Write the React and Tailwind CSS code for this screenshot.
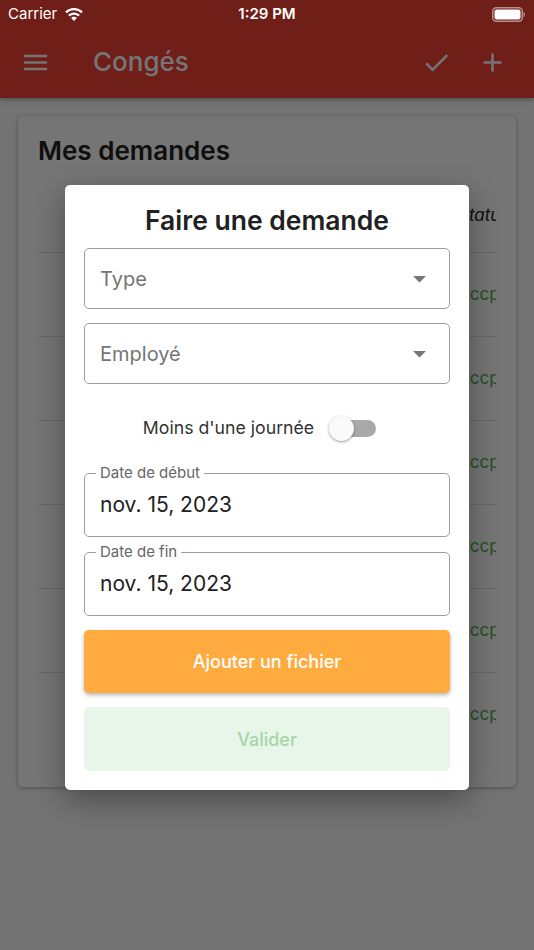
import React from "react";

function MenuIcon() {
  return (
    <svg width="31" height="31" viewBox="0 0 24 24" fill="#ffffff">
      <path d="M3 18h18v-2H3v2zm0-5h18v-2H3v2zm0-7v2h18V6H3z" />
    </svg>
  );
}
function CheckIcon() {
  return (
    <svg width="31" height="31" viewBox="0 0 24 24" fill="#ffffff">
      <path d="M9 16.2L4.8 12l-1.4 1.4L9 19 21 7l-1.4-1.4L9 16.2z" />
    </svg>
  );
}
function PlusIcon() {
  return (
    <svg width="31" height="31" viewBox="0 0 24 24" fill="#ffffff">
      <path d="M19 13h-6v6h-2v-6H5v-2h6V5h2v6h6v2z" />
    </svg>
  );
}
function ArrowDrop() {
  return (
    <svg width="31" height="31" viewBox="0 0 24 24" fill="#757575">
      <path d="M7 10l5 5 5-5z" />
    </svg>
  );
}
function Wifi() {
  return (
    <svg width="18" height="13" viewBox="0 0 18 13" fill="#ffffff">
      <path d="M9 0C5.6 0 2.5 1.3 0.2 3.5l1.6 1.7C3.7 3.4 6.2 2.3 9 2.3s5.3 1.1 7.2 2.9l1.6-1.7C15.5 1.3 12.4 0 9 0z" />
      <path d="M9 4.4c-2.3 0-4.4 0.9-5.9 2.4l1.6 1.7C5.8 7.4 7.3 6.7 9 6.7s3.2 0.7 4.3 1.8l1.6-1.7C13.4 5.3 11.3 4.4 9 4.4z" />
      <path d="M9 8.8c-1.1 0-2.2 0.5-2.9 1.2L9 13l2.9-3C11.2 9.3 10.1 8.8 9 8.8z" />
    </svg>
  );
}
function Battery() {
  return (
    <svg width="34" height="15" viewBox="0 0 34 15">
      <rect x="0.75" y="0.75" width="29.5" height="13.5" rx="3.5" fill="none" stroke="#ffffff" strokeOpacity="0.5" strokeWidth="1.5" />
      <rect x="2.5" y="2.5" width="26" height="10" rx="2" fill="#ffffff" />
      <path d="M31.5 5v5c0.9-0.3 1.5-1.3 1.5-2.5S32.4 5.3 31.5 5z" fill="#ffffff" fillOpacity="0.5" />
    </svg>
  );
}

const rows = [0, 1, 2, 3, 4, 5];

export default function App() {
  return (
    <div
      className="relative w-[534px] h-[950px] overflow-hidden bg-[#fafafa]"
      style={{ fontFamily: "Inter, 'Noto Sans', sans-serif" }}
    >
      {/* App bar */}
      <div className="bg-[#f44336] pt-[26px] shadow-[0_2px_5px_rgba(0,0,0,0.3)] relative z-[1]">
        <div className="h-[72px] flex items-center">
          <div className="ml-[20px] flex items-center">
            <MenuIcon />
          </div>
          <div className="ml-[42px] text-white text-[26px] font-medium leading-none">Congés</div>
          <div className="ml-auto flex items-center">
            <CheckIcon />
          </div>
          <div className="ml-[25px] mr-[26px] flex items-center">
            <PlusIcon />
          </div>
        </div>
      </div>

      {/* Card */}
      <div className="mx-[18px] mt-[18px] h-[671px] bg-white rounded-[5px] shadow-[0_1px_4px_rgba(0,0,0,0.3)] px-[20px] pt-[20px]">
        <div className="text-[26px] font-semibold leading-[30px] text-[#212121]">Mes demandes</div>
        <div className="overflow-hidden mt-[14px]">
          <div className="w-[600px]">
            <div className="h-[72px] flex items-center italic text-[17px] text-[#212121]">
              <div className="w-[100px] ml-[50px]">Type</div>
              <div className="w-[150px]">Début</div>
              <div className="w-[120px]">Fin</div>
              <div>Statut</div>
            </div>
            {rows.map((r) => (
              <div key={r} className="h-[84px] border-t border-[#e0e0e0] flex items-center text-[17px]">
                <div className="w-[100px] ml-[50px] text-[#212121]">Congé</div>
                <div className="w-[150px] text-[#212121]">15/11/2023</div>
                <div className="w-[120px] text-[#212121]">15/11/2023</div>
                <div className="text-[#4caf50]">Accpté</div>
              </div>
            ))}
          </div>
        </div>
      </div>

      {/* Overlay */}
      <div className="absolute inset-0 z-10 bg-[rgba(0,0,0,0.54)] flex justify-center items-start pt-[185px]">
        <div className="w-[404px] bg-white rounded-[5px] shadow-[0_10px_30px_rgba(0,0,0,0.35)] px-[19px] pt-[18px] pb-[19px]">
          <div className="text-center text-[26.5px] font-semibold leading-[34px] text-[#212121]">Faire une demande</div>

          <div className="mt-[11px] h-[61px] border border-[#9e9e9e] rounded-[5px] flex items-center pl-[15px] pr-[14px]">
            <span className="text-[20px] text-[#757575]">Type</span>
            <span className="ml-auto flex items-center"><ArrowDrop /></span>
          </div>
          <div className="mt-[14px] h-[61px] border border-[#9e9e9e] rounded-[5px] flex items-center pl-[15px] pr-[14px]">
            <span className="text-[20px] text-[#757575]">Employé</span>
            <span className="ml-auto flex items-center"><ArrowDrop /></span>
          </div>

          <div className="mt-[20px] h-[48px] flex items-center justify-center">
            <span className="text-[17.7px] text-[#333333]">Moins d'une journée</span>
            <div className="ml-[15px] w-[62px] h-[25px] relative">
              <div className="absolute left-[6px] top-[4px] w-[41px] h-[17px] rounded-full bg-[#a9a9a9]" />
              <div className="absolute left-0 top-0 w-[25px] h-[25px] rounded-full bg-[#fafafa] shadow-[0_1px_3px_rgba(0,0,0,0.4)]" />
            </div>
          </div>

          <div className="mt-[21px] relative h-[64px] border border-[#9e9e9e] rounded-[5px] flex items-center pl-[15px]">
            <span className="absolute -top-[10px] left-[11px] px-[4px] bg-white text-[15px] leading-[18px] text-[#666666]">Date de début</span>
            <span className="text-[21px] text-[#212121]">nov. 15, 2023</span>
          </div>
          <div className="mt-[15px] relative h-[64px] border border-[#9e9e9e] rounded-[5px] flex items-center pl-[15px]">
            <span className="absolute -top-[10px] left-[11px] px-[4px] bg-white text-[15px] leading-[18px] text-[#666666]">Date de fin</span>
            <span className="text-[21px] text-[#212121]">nov. 15, 2023</span>
          </div>

          <div className="mt-[14px] h-[63px] rounded-[5px] bg-[#ffab40] shadow-[0_2px_4px_rgba(0,0,0,0.3)] flex items-center justify-center text-white text-[18px] font-medium">
            Ajouter un fichier
          </div>
          <div className="mt-[14px] h-[64px] rounded-[5px] bg-[#e8f5e9] flex items-center justify-center text-[#a5d6a7] text-[18px] font-medium">
            Valider
          </div>
        </div>
      </div>

      {/* Status bar over overlay */}
      <div className="absolute top-0 left-0 right-0 h-[28px] z-20 flex items-center px-[8px] text-white text-[15px]">
        <span>Carrier</span>
        <span className="ml-[8px] flex items-center"><Wifi /></span>
        <span className="absolute left-0 right-0 text-center font-semibold pointer-events-none">1:29 PM</span>
        <span className="ml-auto flex items-center"><Battery /></span>
      </div>
    </div>
  );
}
